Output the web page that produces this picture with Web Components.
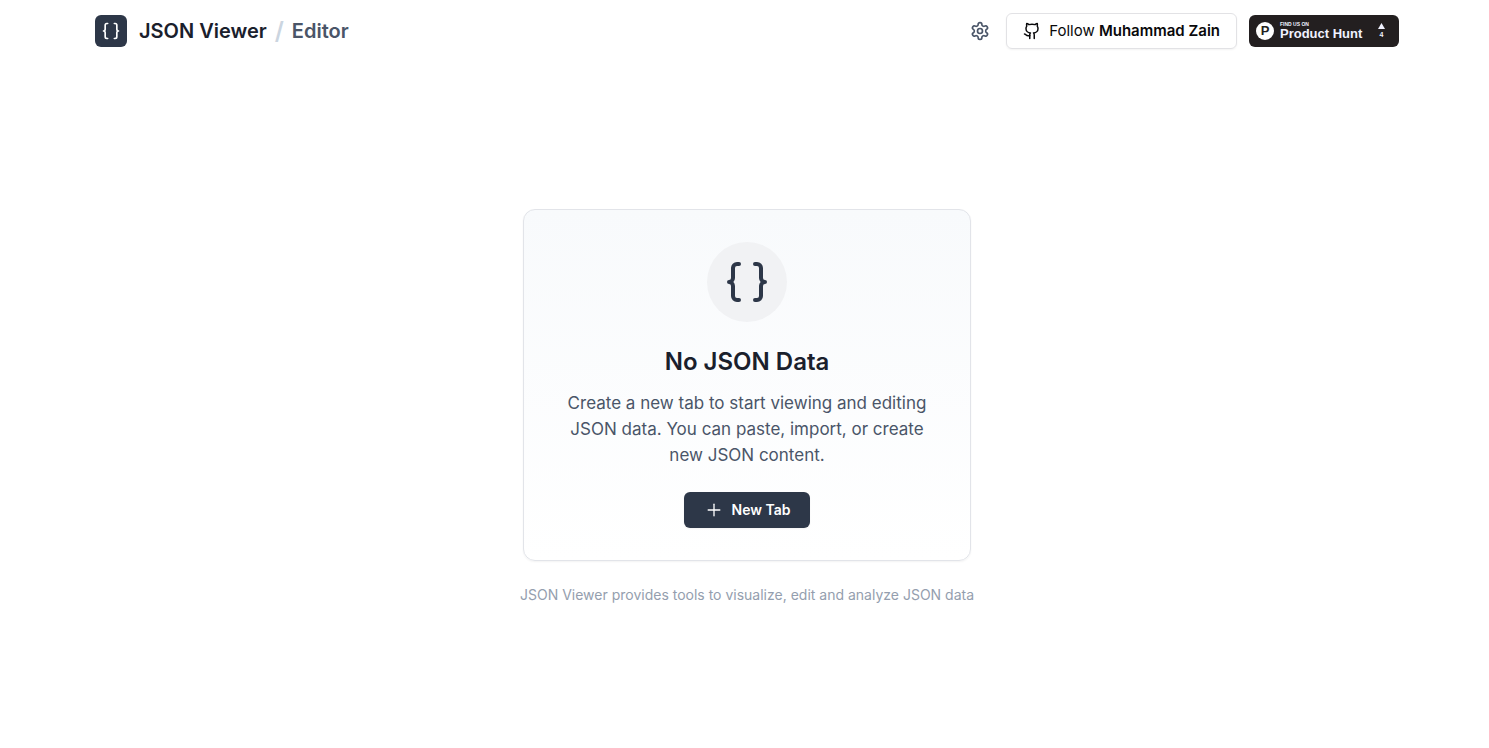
<!DOCTYPE html>
<html lang="en">
<head>
  <meta charset="UTF-8">
  <meta name="viewport" content="width=device-width, initial-scale=1.0">
  <title>JSON Viewer / Editor</title>
  <style>
    body {
      margin: 0;
      font-family: Inter, sans-serif;
      color: #1a202c;
      background: #fff;
    }
  </style>
</head>
<body>
  <json-app></json-app>

  <script>
    // Inner markup of each icon, all on a 24x24 grid
    const ICONS = {
      braces: '<path d="M8 3H7a2 2 0 0 0-2 2v5a2 2 0 0 1-2 2 2 2 0 0 1 2 2v5c0 1.1.9 2 2 2h1"/><path d="M16 21h1a2 2 0 0 0 2-2v-5c0-1.1.9-2 2-2a2 2 0 0 1-2-2V5a2 2 0 0 0-2-2h-1"/>',
      settings: '<path d="M12.22 2h-.44a2 2 0 0 0-2 2v.18a2 2 0 0 1-1 1.73l-.43.25a2 2 0 0 1-2 0l-.15-.08a2 2 0 0 0-2.73.73l-.22.38a2 2 0 0 0 .73 2.73l.15.1a2 2 0 0 1 1 1.72v.51a2 2 0 0 1-1 1.74l-.15.09a2 2 0 0 0-.73 2.73l.22.38a2 2 0 0 0 2.73.73l.15-.08a2 2 0 0 1 2 0l.43.25a2 2 0 0 1 1 1.73V20a2 2 0 0 0 2 2h.44a2 2 0 0 0 2-2v-.18a2 2 0 0 1 1-1.73l.43-.25a2 2 0 0 1 2 0l.15.08a2 2 0 0 0 2.73-.73l.22-.39a2 2 0 0 0-.73-2.73l-.15-.08a2 2 0 0 1-1-1.74v-.5a2 2 0 0 1 1-1.74l.15-.09a2 2 0 0 0 .73-2.73l-.22-.38a2 2 0 0 0-2.73-.73l-.15.08a2 2 0 0 1-2 0l-.43-.25a2 2 0 0 1-1-1.73V4a2 2 0 0 0-2-2z"/><circle cx="12" cy="12" r="3"/>',
      github: '<path d="M15 22v-4a4.8 4.8 0 0 0-1-3.5c3 0 6-2 6-5.5.08-1.25-.27-2.48-1-3.5.28-1.15.28-2.35 0-3.5 0 0-1 0-3 1.5-2.64-.5-5.36-.5-8 0C6 2 5 2 5 2c-.3 1.15-.3 2.35 0 3.5A5.403 5.403 0 0 0 4 9c0 3.5 3 5.5 6 5.5-.39.49-.68 1.05-.85 1.65-.17.6-.22 1.23-.15 1.85v4"/><path d="M9 18c-4.51 2-5-2-7-2"/>',
      plus: '<path d="M5 12h14"/><path d="M12 5v14"/>'
    };

    // Stroke icon: <ui-icon name="plus">, sized with --icon-size
    class UiIcon extends HTMLElement {
      constructor() {
        super();
        this.attachShadow({ mode: 'open' });
      }

      connectedCallback() {
        const stroke = this.getAttribute('stroke') || 2;
        this.shadowRoot.innerHTML = `
          <style>
            :host { display: block; flex: none; width: var(--icon-size, 20px); height: var(--icon-size, 20px); }
            svg { display: block; width: 100%; height: 100%; }
          </style>
          <svg viewBox="0 0 24 24" fill="none" stroke="currentColor" stroke-width="${stroke}"
            stroke-linecap="round" stroke-linejoin="round" aria-hidden="true">${ICONS[this.getAttribute('name')]}</svg>
        `;
      }
    }

    class AppBrand extends HTMLElement {
      constructor() {
        super();
        this.attachShadow({ mode: 'open' });
        this.shadowRoot.innerHTML = `
          <style>
            :host { display: block; }
            h1 {
              display: flex;
              align-items: center;
              gap: 12px;
              margin: 0;
              font-size: 20px;
              line-height: 32px;
              font-weight: 600;
            }
            .logo {
              display: grid;
              place-items: center;
              width: 32px;
              height: 32px;
              border-radius: 6px;
              background: #2d3748;
              color: #fff;
            }
            .name { display: flex; gap: 8px; }
            .slash { color: #cbd5e0; font-size: 24px; }
            .sub { color: #4a5568; }
          </style>
          <h1>
            <span class="logo"><ui-icon name="braces"></ui-icon></span>
            <span class="name"><span>JSON Viewer</span><span class="slash">/</span><span class="sub">Editor</span></span>
          </h1>
        `;
      }
    }

    class FollowLink extends HTMLElement {
      constructor() {
        super();
        this.attachShadow({ mode: 'open' });
        this.shadowRoot.innerHTML = `
          <style>
            :host { display: block; }
            a {
              display: flex;
              align-items: center;
              gap: 8px;
              padding: 7px 16px;
              border: 1px solid #e2e2e5;
              border-radius: 6px;
              box-shadow: 0 1px 2px rgba(0, 0, 0, 0.05);
              color: #09090b;
              font-size: 15px;
              line-height: 20px;
              text-decoration: none;
              white-space: nowrap;
            }
            ui-icon { --icon-size: 18px; }
            ::slotted(strong) { font-weight: 600; }
          </style>
          <a href="#follow"><ui-icon name="github"></ui-icon><span><slot></slot></span></a>
        `;
      }
    }

    class HuntBadge extends HTMLElement {
      constructor() {
        super();
        this.attachShadow({ mode: 'open' });
        this.shadowRoot.innerHTML = `
          <style>
            :host { display: block; }
            a {
              display: flex;
              align-items: center;
              gap: 6px;
              box-sizing: border-box;
              min-width: 150px;
              height: 32px;
              padding: 0 14px 0 7px;
              border-radius: 6px;
              background: #231f20;
              color: #f0f2ff;
              font-family: "Liberation Sans", Arial, sans-serif;
              font-weight: 700;
              text-decoration: none;
              white-space: nowrap;
            }
            .mark {
              display: grid;
              place-items: center;
              width: 18px;
              height: 18px;
              border-radius: 50%;
              background: #fff;
              color: #231f20;
              font-size: 13px;
              line-height: 18px;
            }
            .label { display: grid; flex: 1; font-size: 13px; line-height: 14px; }
            .label small { font-size: 5px; line-height: 6px; }
            .votes { display: grid; justify-items: center; gap: 2px; font-size: 7px; line-height: 8px; }
            svg { display: block; width: 7px; height: 6px; }
          </style>
          <a href="#product-hunt">
            <span class="mark">P</span>
            <span class="label"><small>FIND US ON</small><span>Product Hunt</span></span>
            <span class="votes">
              <svg viewBox="0 0 7 6" fill="currentColor" aria-hidden="true"><path d="M3.5 0L7 6H0z"/></svg>
              <slot></slot>
            </span>
          </a>
        `;
      }
    }

    class AppHeader extends HTMLElement {
      constructor() {
        super();
        this.attachShadow({ mode: 'open' });
        this.shadowRoot.innerHTML = `
          <style>
            :host { display: block; padding: 13px 0; }
            header { display: flex; align-items: center; justify-content: space-between; }
            .actions { display: flex; align-items: center; gap: 12px; }
            button {
              display: grid;
              place-items: center;
              padding: 4px;
              border: 0;
              background: none;
              color: #4a5568;
            }
          </style>
          <header>
            <app-brand></app-brand>
            <div class="actions">
              <button type="button" aria-label="Settings"><ui-icon name="settings"></ui-icon></button>
              <follow-link>Follow <strong>Muhammad Zain</strong></follow-link>
              <hunt-badge>4</hunt-badge>
            </div>
          </header>
        `;
      }
    }

    class EmptyState extends HTMLElement {
      constructor() {
        super();
        this.attachShadow({ mode: 'open' });
        this.shadowRoot.innerHTML = `
          <style>
            :host {
              display: flex;
              flex-direction: column;
              align-items: center;
              box-sizing: border-box;
              width: 100%;
              max-width: 448px;
              padding: 32px;
              border: 1px solid #e2e4e9;
              border-radius: 12px;
              background: linear-gradient(to bottom, #f8fafc, #fff);
              box-shadow: 0 1px 2px rgba(0, 0, 0, 0.05);
              text-align: center;
            }
            .circle {
              display: grid;
              place-items: center;
              width: 80px;
              height: 80px;
              margin-bottom: 24px;
              border-radius: 50%;
              background: #f1f2f4;
              color: #2d3748;
              --icon-size: 48px;
            }
            h2 { margin: 0 0 12px; font-size: 24px; line-height: 32px; font-weight: 600; }
            p { margin: 0 0 24px; font-size: 17px; line-height: 26px; color: #4a5568; }
            button {
              display: flex;
              align-items: center;
              gap: 8px;
              padding: 8px 20px;
              border: 0;
              border-radius: 6px;
              background: #2d3748;
              box-shadow: 0 1px 2px rgba(0, 0, 0, 0.05);
              color: #fff;
              font: 600 14px/20px Inter, sans-serif;
              --icon-size: 20px;
            }
          </style>
          <div class="circle"><ui-icon name="braces"></ui-icon></div>
          <h2><slot name="title"></slot></h2>
          <p><slot></slot></p>
          <button type="button"><ui-icon name="plus" stroke="1.6"></ui-icon>New Tab</button>
        `;
      }
    }

    class JsonApp extends HTMLElement {
      constructor() {
        super();
        this.attachShadow({ mode: 'open' });
        this.shadowRoot.innerHTML = `
          <style>
            :host {
              display: flex;
              flex-direction: column;
              box-sizing: border-box;
              min-height: 100vh;
              padding: 0 16px 0 21px;
            }
            app-header { width: 100%; max-width: 1304px; margin: 0 auto; }
            main {
              display: flex;
              flex: 1;
              flex-direction: column;
              align-items: center;
              justify-content: center;
              gap: 24px;
              padding-top: 4px;
            }
            footer { font-size: 14px; line-height: 20px; color: #949eae; text-align: center; }
          </style>
          <app-header></app-header>
          <main>
            <empty-state>
              <span slot="title">No JSON Data</span>
              Create a new tab to start viewing and editing JSON data. You can paste, import, or create new JSON content.
            </empty-state>
            <footer>JSON Viewer provides tools to visualize, edit and analyze JSON data</footer>
          </main>
        `;
      }
    }

    customElements.define('ui-icon', UiIcon);
    customElements.define('app-brand', AppBrand);
    customElements.define('follow-link', FollowLink);
    customElements.define('hunt-badge', HuntBadge);
    customElements.define('app-header', AppHeader);
    customElements.define('empty-state', EmptyState);
    customElements.define('json-app', JsonApp);
  </script>
</body>
</html>
